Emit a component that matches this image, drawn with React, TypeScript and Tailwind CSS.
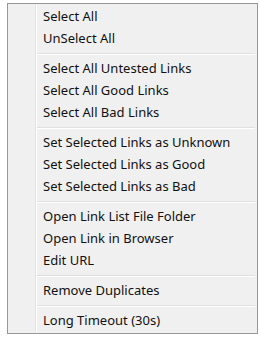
const groups: string[][] = [
  ['Select All', 'UnSelect All'],
  ['Select All Untested Links', 'Select All Good Links', 'Select All Bad Links'],
  ['Set Selected Links as Unknown', 'Set Selected Links as Good', 'Set Selected Links as Bad'],
  ['Open Link List File Folder', 'Open Link in Browser', 'Edit URL'],
  ['Remove Duplicates'],
  ['Long Timeout (30s)'],
]

function Separator() {
  return (
    <div className="flex h-[8px] items-center pl-[29px] pr-[2px]">
      <div className="flex-1 border-t border-[#e0e0e0] border-b border-b-white" />
    </div>
  )
}

export default function App() {
  return (
    <div className="h-[340px] w-[260px] bg-white p-[3px] pl-[7px]">
      <div
        className="relative h-[331px] w-[251px] border border-[#979797] bg-[#f0f0f0] py-[2px] text-[13px] text-[#111]"
        style={{ fontFamily: '"Noto Sans", "Open Sans", sans-serif' }}
      >
        {/* gutter line */}
        <div className="absolute top-[1px] bottom-[1px] left-[27px] w-[2px] border-l border-[#e2e3e3] border-r border-r-white" />
        {groups.map((items, gi) => (
          <div key={gi}>
            {gi > 0 && <Separator />}
            {items.map(label => (
              <div key={label} className="flex h-[22px] items-center pl-[35px]">
                {label}
              </div>
            ))}
          </div>
        ))}
      </div>
    </div>
  )
}
